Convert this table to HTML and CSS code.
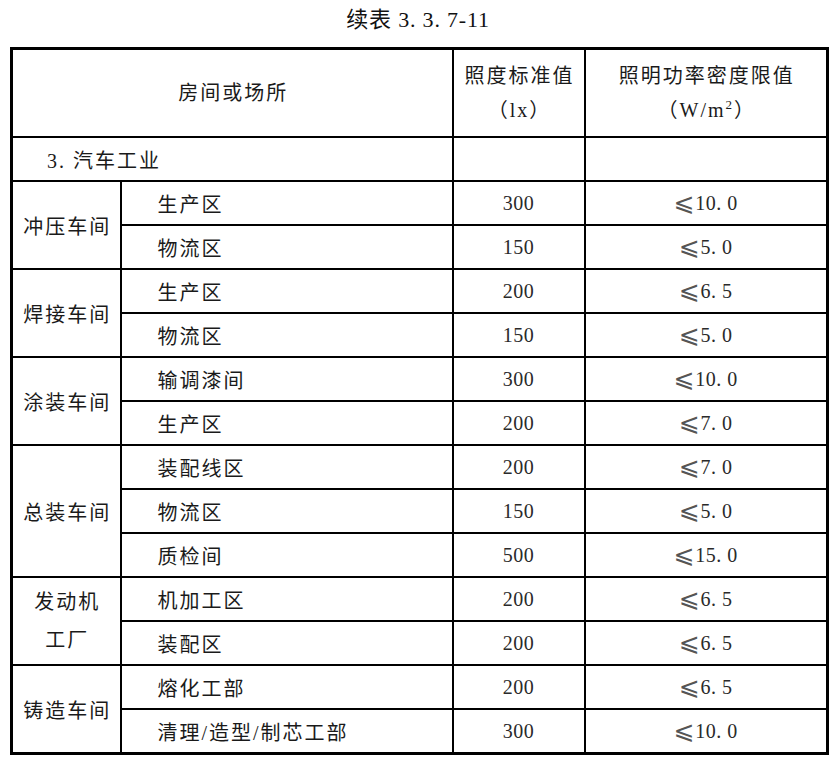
FILE: index.html
```html
<!DOCTYPE html>
<html lang="zh-CN">
<head>
<meta charset="utf-8">
<title>续表 3.3.7-11</title>
<link rel="stylesheet" href="styles.css">
</head>
<body>
<div class="page">
  <div class="caption">续表 3. 3. 7-11</div>
  <table class="tbl">
    <colgroup>
      <col class="c1"><col class="c2"><col class="c3"><col class="c4">
    </colgroup>
    <tr class="head">
      <td colspan="2" class="cj center">房间或场所</td>
      <td class="cj center"><div>照度标准值</div><div>（lx）</div></td>
      <td class="cj center"><div>照明功率密度限值</div><div>（W/m<sup>2</sup>）</div></td>
    </tr>
    <tr class="row">
      <td colspan="2" class="cj section">3. 汽车工业</td>
      <td></td>
      <td></td>
    </tr>
    <tr class="row">
      <td rowspan="2" class="cj center">冲压车间</td>
      <td class="cj name">生产区</td>
      <td class="num">300</td>
      <td class="num"><span class="le">⩽</span>10. 0</td>
    </tr>
    <tr class="row">
      <td class="cj name">物流区</td>
      <td class="num">150</td>
      <td class="num"><span class="le">⩽</span>5. 0</td>
    </tr>
    <tr class="row">
      <td rowspan="2" class="cj center">焊接车间</td>
      <td class="cj name">生产区</td>
      <td class="num">200</td>
      <td class="num"><span class="le">⩽</span>6. 5</td>
    </tr>
    <tr class="row">
      <td class="cj name">物流区</td>
      <td class="num">150</td>
      <td class="num"><span class="le">⩽</span>5. 0</td>
    </tr>
    <tr class="row">
      <td rowspan="2" class="cj center">涂装车间</td>
      <td class="cj name">输调漆间</td>
      <td class="num">300</td>
      <td class="num"><span class="le">⩽</span>10. 0</td>
    </tr>
    <tr class="row">
      <td class="cj name">生产区</td>
      <td class="num">200</td>
      <td class="num"><span class="le">⩽</span>7. 0</td>
    </tr>
    <tr class="row">
      <td rowspan="3" class="cj center">总装车间</td>
      <td class="cj name">装配线区</td>
      <td class="num">200</td>
      <td class="num"><span class="le">⩽</span>7. 0</td>
    </tr>
    <tr class="row thin">
      <td class="cj name">物流区</td>
      <td class="num">150</td>
      <td class="num"><span class="le">⩽</span>5. 0</td>
    </tr>
    <tr class="row">
      <td class="cj name">质检间</td>
      <td class="num">500</td>
      <td class="num"><span class="le">⩽</span>15. 0</td>
    </tr>
    <tr class="row">
      <td rowspan="2" class="cj center two">发动机<br>工厂</td>
      <td class="cj name">机加工区</td>
      <td class="num">200</td>
      <td class="num"><span class="le">⩽</span>6. 5</td>
    </tr>
    <tr class="row">
      <td class="cj name">装配区</td>
      <td class="num">200</td>
      <td class="num"><span class="le">⩽</span>6. 5</td>
    </tr>
    <tr class="row">
      <td rowspan="2" class="cj center">铸造车间</td>
      <td class="cj name">熔化工部</td>
      <td class="num">200</td>
      <td class="num"><span class="le">⩽</span>6. 5</td>
    </tr>
    <tr class="row">
      <td class="cj name">清理/造型/制芯工部</td>
      <td class="num">300</td>
      <td class="num"><span class="le">⩽</span>10. 0</td>
    </tr>
  </table>
</div>
</body>
</html>
```
FILE: styles.css
```css
html, body {
  margin: 0;
  padding: 0;
  background: #ffffff;
}

body {
  font-family: "Liberation Serif", "Noto Sans CJK SC", serif;
  color: #1a1a1a;
}

.page {
  padding: 0 9px 0 10px;
}

.caption {
  height: 47px;
  box-sizing: border-box;
  padding-top: 6px;
  text-align: center;
  font-size: 22px;
  line-height: 28px;
  letter-spacing: 0.8px;
  color: #111;
}

.tbl {
  width: 816px;
  border-collapse: collapse;
  table-layout: fixed;
  border: 3px solid #000;
}

.c1 { width: 109px; }
.c2 { width: 332px; }
.c3 { width: 132px; }
.c4 { width: 243px; }

.tbl td {
  border: 2px solid #000;
  padding: 0;
  vertical-align: middle;
  font-size: 20px;
}

.tbl tr.head td {
  height: 86px;
  line-height: 34px;
}

.tbl tr.row td {
  height: 42px;
}

.tbl tr.thin td {
  border-top-width: 1px;
}

.cj {
  letter-spacing: 2px;
  color: #1a1a1a;
}

.center {
  text-align: center;
  padding-left: 2px !important;
}

.two {
  line-height: 38px;
}

.section {
  padding-left: 34px !important;
}

.name {
  padding-left: 36px !important;
}

.num {
  text-align: center;
  font-size: 20px;
  color: #2a2a2a;
  letter-spacing: 0.5px;
}

.le {
  font-family: "DejaVu Sans", "DejaVu Serif", serif;
  font-size: 25px;
  line-height: 0;
  vertical-align: -1px;
  color: #555;
}

sup {
  font-size: 13px;
  line-height: 0;
  vertical-align: 8px;
}
```
